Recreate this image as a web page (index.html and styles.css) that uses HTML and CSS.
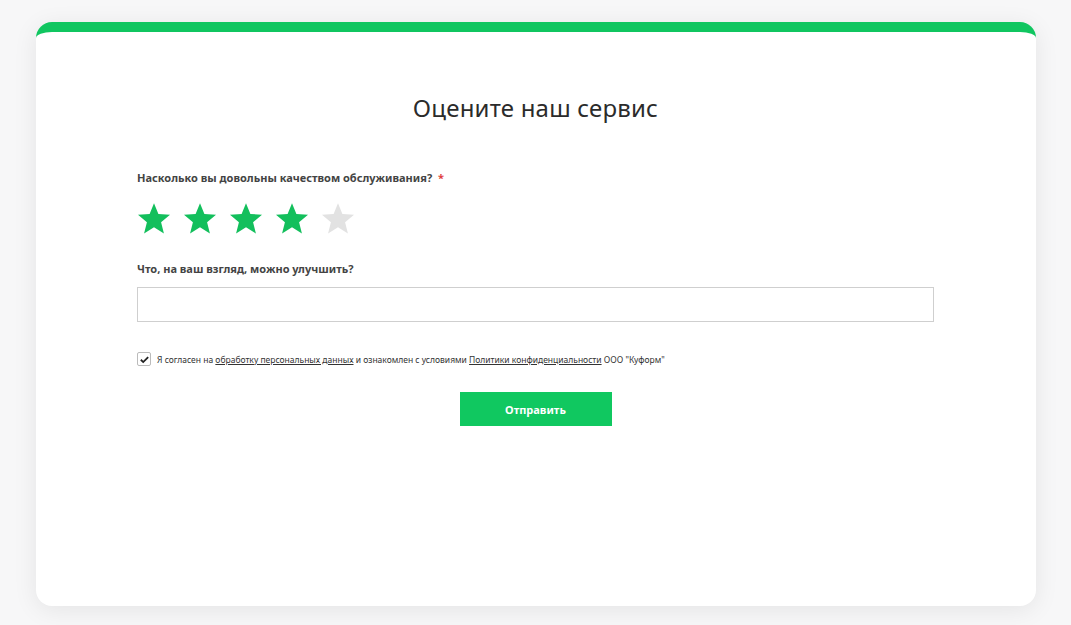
FILE: index.html
```html
<!DOCTYPE html>
<html lang="ru">
<head>
    <meta charset="UTF-8">
    <title>Оцените наш сервис</title>
    <link rel="stylesheet" href="styles.css">
</head>
<body>
    <div class="card">
        <h1 class="title">Оцените наш сервис</h1>

        <form class="form">
            <div class="field">
                <label class="label">Насколько вы довольны качеством обслуживания? <span class="req">*</span></label>
                <div class="stars">
                    <svg class="star on" viewBox="0 0 24 24"><path d="M12 1.5l3.1 7.6 8.2.6-6.3 5.3 2 8-7-4.4-7 4.4 2-8L.7 9.7l8.2-.6z"/></svg>
                    <svg class="star on" viewBox="0 0 24 24"><path d="M12 1.5l3.1 7.6 8.2.6-6.3 5.3 2 8-7-4.4-7 4.4 2-8L.7 9.7l8.2-.6z"/></svg>
                    <svg class="star on" viewBox="0 0 24 24"><path d="M12 1.5l3.1 7.6 8.2.6-6.3 5.3 2 8-7-4.4-7 4.4 2-8L.7 9.7l8.2-.6z"/></svg>
                    <svg class="star on" viewBox="0 0 24 24"><path d="M12 1.5l3.1 7.6 8.2.6-6.3 5.3 2 8-7-4.4-7 4.4 2-8L.7 9.7l8.2-.6z"/></svg>
                    <svg class="star" viewBox="0 0 24 24"><path d="M12 1.5l3.1 7.6 8.2.6-6.3 5.3 2 8-7-4.4-7 4.4 2-8L.7 9.7l8.2-.6z"/></svg>
                </div>
            </div>

            <div class="field">
                <label class="label">Что, на ваш взгляд, можно улучшить?</label>
                <input class="input" type="text">
            </div>

            <label class="agree">
                <span class="check">
                    <svg viewBox="0 0 12 12"><path d="M2 6.3l2.6 2.5L10 3.4" /></svg>
                </span>
                <span>Я согласен на <a href="#">обработку персональных данных</a> и ознакомлен с условиями <a href="#">Политики конфиденциальности</a> ООО "Куформ"</span>
            </label>

            <div class="actions">
                <button class="submit" type="button">Отправить</button>
            </div>
        </form>
    </div>
</body>
</html>
```

FILE: styles.css
```css
* {
    margin: 0;
    padding: 0;
    box-sizing: border-box;
}

body {
    background: #f7f7f8;
    font-family: 'Noto Sans', sans-serif;
    color: #333;
    padding: 22px 35px 19px 36px;
}

/* Card */
.card {
    width: 1000px;
    height: 584px;
    background: #fff;
    border-top: 10px solid #10c660;
    border-radius: 16px;
    box-shadow: 0 4px 24px rgba(0, 0, 0, 0.08);
    padding: 59px 102px 0 101px;
}

.title {
    font-size: 24px;
    font-weight: 400;
    text-align: center;
    color: #2b2b2b;
    letter-spacing: 0.2px;
    margin-bottom: 46px;
}

/* Form */
.field {
    margin-bottom: 26px;
}

.label {
    display: block;
    font-size: 11px;
    font-weight: 700;
    color: #444;
}

.req {
    color: #e04040;
    margin-left: 3px;
}

.stars {
    display: flex;
    gap: 12px;
    margin-top: 16px;
}

.star {
    width: 34px;
    height: 34px;
    fill: #e2e2e2;
}

.star.on {
    fill: #13bf5c;
}

.input {
    display: block;
    width: 100%;
    height: 35px;
    margin-top: 11px;
    border: 1px solid #cfcfcf;
    background: #fff;
}

.agree {
    display: flex;
    align-items: center;
    gap: 6px;
    font-size: 8.5px;
    color: #333;
    margin-top: 30px;
}

.check {
    width: 14px;
    height: 14px;
    border: 1px solid #bbb;
    border-radius: 2px;
    display: flex;
    align-items: center;
    justify-content: center;
}

.check svg {
    width: 11px;
    height: 11px;
    fill: none;
    stroke: #222;
    stroke-width: 2;
}

.agree a {
    color: #333;
    text-decoration: underline;
}

.actions {
    display: flex;
    justify-content: center;
    margin-top: 26px;
}

.submit {
    width: 152px;
    height: 34px;
    background: #10c860;
    color: #fff;
    border: none;
    font-family: 'Noto Sans', sans-serif;
    font-size: 11px;
    font-weight: 700;
}
```
